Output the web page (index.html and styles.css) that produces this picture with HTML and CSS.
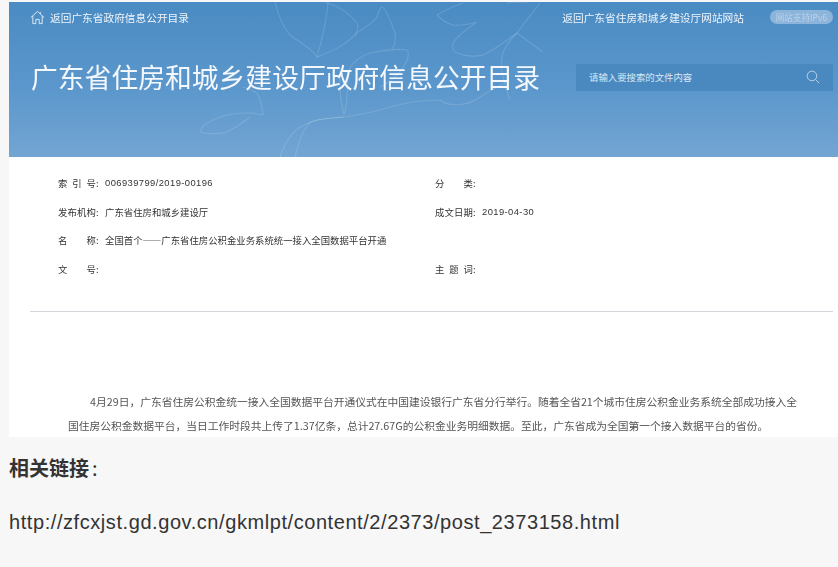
FILE: index.html
```html
<!DOCTYPE html>
<html lang="zh-CN">
<head>
<meta charset="utf-8">
<title>广东省住房和城乡建设厅政府信息公开目录</title>
<link rel="stylesheet" href="styles.css">
</head>
<body>
<main class="shot">
  <header class="banner">
    <svg class="flower" viewBox="9 2 829 155" aria-hidden="true">
      <g fill="none" stroke="#fff" stroke-opacity=".14" stroke-width="1.100">
        <path d="M275 2C278 15 283 27 290 35C300 43 312 48 317 57C321 42 327 22 328 2"/>
        <path d="M326 3C338 5 350 14 357 23C359 28 357 32 355 35C345 45 335 50 317 57"/>
        <path d="M355 35C362 28 372 25 377 17C379 10 380 7 382 7C386 8 391 22 395 33C396 40 395 45 392 49"/>
        <path d="M350 67C355 60 362 56 370 53C385 50 397 48 407 50C410 54 408 62 397 75C392 80 386 84 380 87"/>
        <path d="M340 67C339 85 340 100 344 115M350 67C345 80 350 100 344 115"/>
        <path d="M344 117C360 115 372 112 380 110C392 106 402 104 413 102C425 100 433 101 440 100C450 108 470 105 480 97C492 90 500 85 510 80"/>
        <path d="M344 117C330 118 322 119 317 120C305 124 297 128 293 133C287 140 283 148 280 157"/>
        <path d="M344 117C330 118 318 119 310 122C305 128 302 134 300 140C298 146 296 152 295 157"/>
        <path d="M263 115C258 114 254 113 250 113C238 113 228 114 220 117C212 120 205 124 202 127C200 130 201 133 203 133C213 134 220 134 227 132C235 128 244 122 250 117"/>
        <path d="M263 115C262 106 260 98 257 93C252 90 247 88 243 87"/>
        <path d="M437 15C445 10 455 6 463 3M437 15C442 20 448 24 453 25C460 26 470 24 477 22C468 28 458 35 453 43C452 47 453 50 455 52C465 57 474 57 483 55C495 50 507 40 517 33C526 40 535 46 543 52"/>
        <path d="M517 33C510 40 505 46 503 53C501 60 501 66 502 72C504 82 507 92 510 100"/>
        <path d="M517 33C525 22 533 12 540 3M507 3C512 2 520 2 528 2"/>
      </g>
    </svg>
    <nav class="topbar">
      <a class="home">
        <svg class="home-icon" viewBox="0 0 16 16" aria-hidden="true"><path d="M1 8L8 1.500L15 8M3 6.500V14.500H6.200V10H9.800V14.500H13V6.500M11 2.200V4" fill="none" stroke="#e4eef7" stroke-width="1"/></svg>
        返回广东省政府信息公开目录
      </a>
      <div class="top-right">
        <a class="site-link">返回广东省住房和城乡建设厅网站网站</a>
        <span class="ipv6">网站支持IPv6</span>
      </div>
    </nav>
    <div class="title-row">
      <h1>广东省住房和城乡建设厅政府信息公开目录</h1>
      <div class="search">
        <span>请输入要搜索的文件内容</span>
        <svg class="search-icon" viewBox="0 0 16 16" aria-hidden="true"><circle cx="6.800" cy="6.800" r="5.500" fill="none" stroke="#c5d9ec" stroke-width="1"/><path d="M10.800 10.800L15 15" stroke="#c5d9ec" stroke-width="1"/></svg>
      </div>
    </div>
  </header>
  <section class="doc">
    <div class="meta">
      <div class="cell"><span class="label">索引号</span><span class="sep">:</span><span class="value num">006939799/2019-00196</span></div>
      <div class="cell"><span class="label">分 类</span><span class="sep">:</span></div>
      <div class="cell"><span class="label">发布机构</span><span class="sep">:</span><span class="value">广东省住房和城乡建设厅</span></div>
      <div class="cell"><span class="label">成文日期</span><span class="sep">:</span><span class="value num">2019-04-30</span></div>
      <div class="cell full"><span class="label">名 称</span><span class="sep">:</span><span class="value">全国首个——广东省住房公积金业务系统统一接入全国数据平台开通</span></div>
      <div class="cell"><span class="label">文 号</span><span class="sep">:</span></div>
      <div class="cell"><span class="label">主题词</span><span class="sep">:</span></div>
    </div>
    <hr class="rule">
    <p class="body-text">4月29日，广东省住房公积金统一接入全国数据平台开通仪式在中国建设银行广东省分行举行。随着全省21个城市住房公积金业务系统全部成功接入全国住房公积金数据平台，当日工作时段共上传了1.37亿条，总计27.67G的公积金业务明细数据。至此，广东省成为全国第一个接入数据平台的省份。</p>
  </section>
  <h2 class="links-title">相关链接<span class="colon">:</span></h2>
  <p class="url">http://zfcxjst.gd.gov.cn/gkmlpt/content/2/2373/post_2373158.html</p>
</main>
</body>
</html>
```

FILE: styles.css
```css
* { box-sizing: border-box; }
html, body { margin: 0; height: 100%; }
body {
  background: #f7f7f7;
  font-family: "Noto Sans CJK SC", "Liberation Sans", sans-serif;
  overflow: hidden;
}
.shot { padding: 2px 0 0 9px; }
.banner {
  position: relative;
  height: 155px;
  padding: 0 5px 0 22px;
  background: linear-gradient(180deg, #4a8bc3 0%, #5b97cc 55%, #73a5d3 100%);
  color: #eef4fa;
  overflow: hidden;
}
.flower { position: absolute; left: 0; top: 0; width: 829px; height: 155px; filter: blur(.4px); }
.topbar {
  position: relative;
  display: flex;
  justify-content: space-between;
  align-items: center;
  height: 30px;
  font-size: 10.7px;
  filter: blur(.3px);
}
.home { display: flex; align-items: center; gap: 5px; margin-left: -1px; }
.home-icon { width: 15px; height: 15px; }
.top-right { display: flex; align-items: center; gap: 26px; }
.ipv6 {
  width: 63px;
  height: 14px;
  border-radius: 7px;
  background: #8db4da;
  color: #bcd3e9;
  font-size: 8.6px;
  line-height: 14px;
  text-align: center;
}
.title-row {
  position: relative;
  display: flex;
  justify-content: space-between;
  align-items: center;
  height: 28px;
  margin-top: 31px;
}
h1 {
  margin: 0;
  font-size: 26.8px;
  font-weight: 400;
  line-height: 28px;
  color: #f4f8fc;
  white-space: nowrap;
  filter: blur(.3px);
}
.search {
  display: flex;
  justify-content: space-between;
  align-items: center;
  width: 257px;
  height: 27px;
  padding: 0 13px;
  background: #4a89c0;
  color: #dbe8f3;
  font-size: 9.4px;
}
.search-icon { width: 14px; height: 14px; }
.doc {
  height: 280px;
  padding: 19px 5px 0 21px;
  background: #fff;
  color: #333;
}
.meta {
  display: grid;
  grid-template-columns: 377px 1fr;
  grid-auto-rows: 28.500px;
  padding-left: 28px;
  font-size: 9.4px;
  line-height: 14px;
  filter: blur(.25px);
}
.cell { display: flex; align-items: flex-start; white-space: nowrap; }
.full { grid-column: 1 / -1; }
.label { width: 38px; flex: none; text-align-last: justify; }
.sep { width: 9px; flex: none; }
.num { font-family: "Liberation Sans", sans-serif; letter-spacing: .42px; }
.rule { height: 1px; margin: 21px 0 0; border: 0; background: #d5d3da; }
.body-text {
  margin: 78px 33px 0 38px;
  font-size: 10.75px;
  line-height: 24px;
  color: #555;
  text-indent: 22px;
  filter: blur(.25px);
}
.links-title {
  margin: 19px 0 0 0;
  font-size: 20px;
  font-weight: 700;
  line-height: 24px;
  color: #333;
}
.colon { font-weight: 400; margin-left: 3px; }
.url {
  margin: 30px 0 0;
  font-family: "Liberation Sans", sans-serif;
  font-size: 20px;
  letter-spacing: .57px;
  line-height: 24px;
  color: #333;
}
```
